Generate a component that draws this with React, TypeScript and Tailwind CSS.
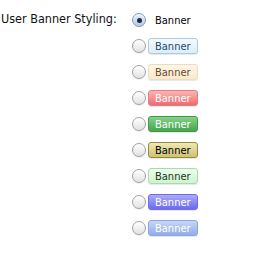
import React, { useState } from 'react';

type Style = {
  id: string;
  badge: string;
};

const styles: Style[] = [
  { id: 'none', badge: 'border-transparent bg-transparent text-black shadow-none' },
  { id: 'blue', badge: 'border-[#a9cbe3] bg-gradient-to-b from-[#f4f9fd] to-[#deedf8] text-[#1d4a73]' },
  { id: 'cream', badge: 'border-[#efdcb9] bg-gradient-to-b from-[#fdf6e9] to-[#f8e9cf] text-[#6a4a26]' },
  { id: 'red', badge: 'border-[#e07f82] bg-gradient-to-b from-[#fbb4b6] to-[#ec6b70] text-white' },
  { id: 'green', badge: 'border-[#3e9a45] bg-gradient-to-b from-[#86d18a] to-[#44a64c] text-white' },
  { id: 'olive', badge: 'border-[#958a3c] bg-gradient-to-b from-[#eee8b4] to-[#cec274] text-black' },
  { id: 'mint', badge: 'border-[#a3dfa8] bg-gradient-to-b from-[#eefcef] to-[#d0f2d2] text-[#143818]' },
  { id: 'violet', badge: 'border-[#6f6ce0] bg-gradient-to-b from-[#acaafc] to-[#6d6aee] text-white' },
  { id: 'steel', badge: 'border-[#8ea6dc] bg-gradient-to-b from-[#c6d6f6] to-[#92ade9] text-white' },
];

function Radio({ checked, onClick }: { checked: boolean; onClick: () => void }) {
  return (
    <button
      type="button"
      onClick={onClick}
      className={
        checked
          ? 'flex h-[14px] w-[14px] items-center justify-center rounded-full border border-[#7d9ab8] bg-gradient-to-b from-[#e8eff8] to-[#b7cbe2] shadow-[inset_0_1px_1px_rgba(255,255,255,0.8)]'
          : 'flex h-[14px] w-[14px] items-center justify-center rounded-full border border-[#a2a2a2] bg-gradient-to-b from-[#ffffff] to-[#e2e2e2] shadow-[0_1px_1px_rgba(0,0,0,0.08)]'
      }
    >
      {checked && <span className="h-[5px] w-[5px] rounded-full bg-[#1b2d45]" />}
    </button>
  );
}

export default function App() {
  const [selected, setSelected] = useState('none');

  return (
    <div className="h-[261px] w-[262px] bg-white font-['DejaVu_Sans_Condensed','DejaVu_Sans',sans-serif]">
      <div className="flex pt-[11px]">
        <div className="w-[132px] pl-[1px] text-[12.5px] leading-[16px] text-[#111]">User Banner Styling:</div>
        <div className="flex flex-col gap-[10px] pt-[1px]">
          {styles.map((s) => (
            <label key={s.id} className="flex h-[16px] items-center gap-[2px]">
              <Radio checked={selected === s.id} onClick={() => setSelected(s.id)} />
              <span
                className={`flex h-[16px] items-center rounded-[3px] border px-[6px] text-[11px] leading-none shadow-[0_1px_1px_rgba(0,0,0,0.1)] ${s.badge}`}
              >
                Banner
              </span>
            </label>
          ))}
        </div>
      </div>
    </div>
  );
}
